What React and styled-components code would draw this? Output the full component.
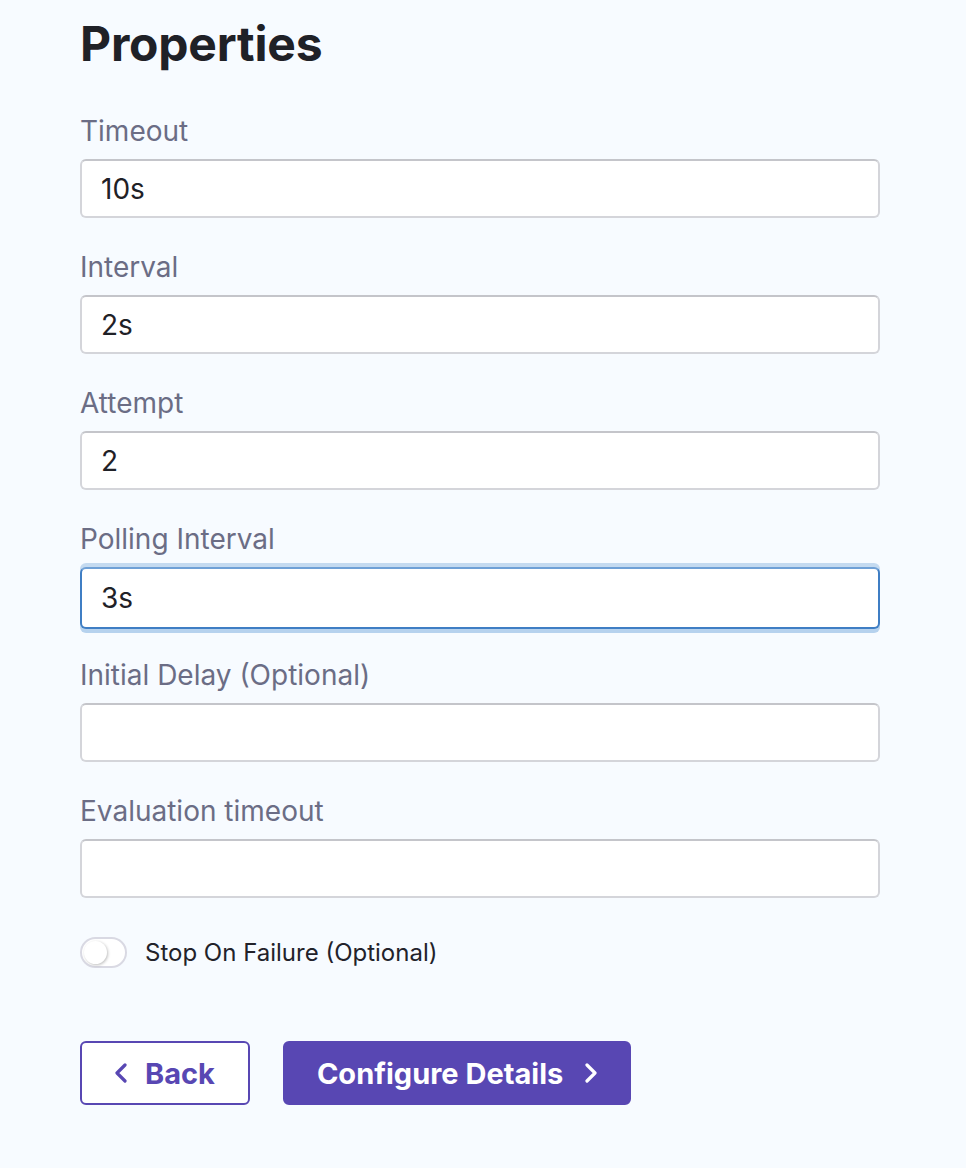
import React from 'react';
import styled, { createGlobalStyle } from 'styled-components';

const GlobalStyle = createGlobalStyle`
    html, body {
        margin: 0;
        padding: 0;
        background: #f7fbff;
        font-family: Inter, "Noto Sans", sans-serif;
    }
`

const Page = styled.div`
    width: 966px;
    min-height: 1168px;
    box-sizing: border-box;
    padding: 14px 86px 0 80px;
`

const Title = styled.h1`
    margin: 0 0 41px 0;
    font-size: 48px;
    line-height: 60px;
    font-weight: 700;
    color: #1f2127;
    letter-spacing: -0.2px;
`

const Form = styled.div`
    display: flex;
    flex-direction: column;
    gap: 33px;
`

const Field = styled.div`
    display: flex;
    flex-direction: column;
    gap: 12px;
`

const Label = styled.label`
    font-size: 28px;
    line-height: 32px;
    color: #6b6d85;
`

const Input = styled.input`
    box-sizing: border-box;
    width: 100%;
    height: ${(props) => props.focused ? "62px" : "59px"};
    margin-bottom: ${(props) => props.focused ? "-3px" : "0"};
    padding: 0 19px;
    font-family: inherit;
    font-size: 28px;
    color: #1f2127;
    background: #ffffff;
    border: 2px solid ${(props) => props.focused ? "#3f7ec4" : "#d4d5da"};
    border-top-color: ${(props) => props.focused ? "#6fa0d6" : "#c4c5ca"};
    border-radius: 6px;
    outline: none;
    box-shadow: ${(props) => props.focused ? "0 -4px 0 #c4daf0, 0 4px 0 #b6d2ee" : "none"};
`

const ToggleRow = styled.div`
    display: flex;
    align-items: center;
    gap: 18px;
    margin-top: 6px;
`

const Toggle = styled.div`
    position: relative;
    box-sizing: border-box;
    width: 47px;
    height: 31px;
    border-radius: 16px;
    background: #ffffff;
    border: 2px solid #d9d9e3;
`

const Knob = styled.div`
    position: absolute;
    left: 2px;
    top: 2px;
    width: 23px;
    height: 23px;
    border-radius: 50%;
    background: #ffffff;
    box-shadow: 1px 1px 3px rgba(0, 0, 0, 0.25);
`

const ToggleText = styled.span`
    font-size: 24px;
    color: #22222a;
`

const Actions = styled.div`
    display: flex;
    gap: 33px;
    margin-top: 73px;
`

const Button = styled.button`
    box-sizing: border-box;
    height: 64px;
    display: flex;
    align-items: center;
    gap: ${(props) => props.primary ? "22px" : "18px"};
    padding: 0 ${(props) => props.primary ? "32px" : "33px"};
    border-radius: 6px;
    font-family: inherit;
    font-size: 29px;
    font-weight: 700;
    cursor: pointer;
    background: ${(props) => props.primary ? "#5847b3" : "#ffffff"};
    color: ${(props) => props.primary ? "#ffffff" : "#5847b3"};
    border: 2px solid #5847b3;
`

const Chevron = ({ dir }) => (
    <svg width="12" height="22" viewBox="0 0 12 22" fill="none">
        <polyline
            points={dir === "left" ? "10,3 2,11 10,19" : "2,3 10,11 2,19"}
            stroke="currentColor"
            strokeWidth="3.2"
            strokeLinecap="round"
            strokeLinejoin="round"
        />
    </svg>
)

const fields = [
    { label: "Timeout", value: "10s" },
    { label: "Interval", value: "2s" },
    { label: "Attempt", value: "2" },
    { label: "Polling Interval", value: "3s", focused: true },
    { label: "Initial Delay (Optional)", value: "" },
    { label: "Evaluation timeout", value: "" },
]

export default function App() {
    return (
        <Page>
            <GlobalStyle />
            <Title>Properties</Title>
            <Form>
                {fields.map((f) => (
                    <Field key={f.label}>
                        <Label>{f.label}</Label>
                        <Input defaultValue={f.value} focused={f.focused} />
                    </Field>
                ))}
                <ToggleRow>
                    <Toggle><Knob /></Toggle>
                    <ToggleText>Stop On Failure (Optional)</ToggleText>
                </ToggleRow>
            </Form>
            <Actions>
                <Button><Chevron dir="left" />Back</Button>
                <Button primary>Configure Details<Chevron dir="right" /></Button>
            </Actions>
        </Page>
    );
}
